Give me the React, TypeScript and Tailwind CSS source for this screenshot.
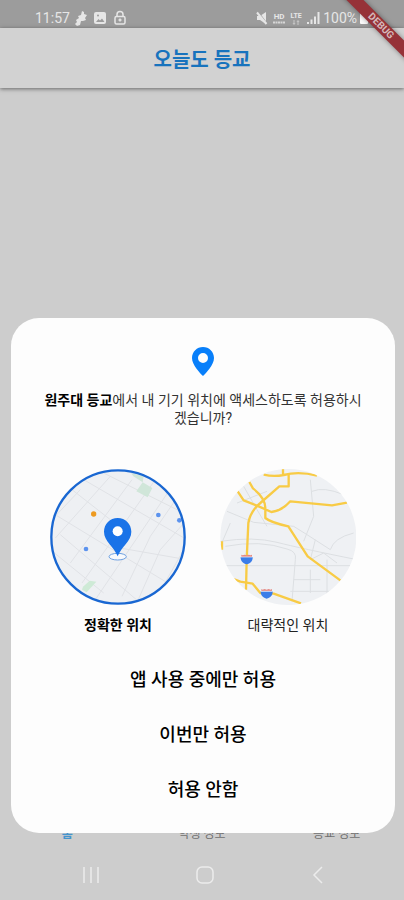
import { useState } from "react";

const PIN =
  "M12 1C5.900 1 1 5.900 1 12c0 7 8 15 11 18 3-3 11-11 11-18 0-6.100-4.900-11-11-11Zm0 6a5 5 0 1 1 0 10 5 5 0 0 1 0-10Z";

function StatusBar() {
  return (
    <div className="flex h-7 items-end justify-between bg-[#9c9c9c] pr-9 pl-[35px] text-[#e6e6e6]">
      <div className="flex h-5 items-center gap-1">
        <span className="text-sm leading-5">11:57</span>
        <svg viewBox="0 0 14 16" className="h-4 w-3.5" fill="currentColor" aria-hidden="true">
          <path d="M8 1l2 1v2l3 1-2 3 1 2-3 1-2 0-1 4-3 1-2-2 2-2-1-2 3-2-1-2 3-1Z" />
        </svg>
        <svg viewBox="0 0 14 14" className="ml-px h-3.5 w-3.5" aria-hidden="true">
          <rect x="1" y="1" width="12" height="12" rx="2" fill="currentColor" />
          <path d="M3 11l2.500-3 1.500 1.500 2-2 2.500 3.500Z" fill="#9c9c9c" />
          <circle cx="5" cy="4.500" r="1" fill="#9c9c9c" />
        </svg>
        <svg viewBox="0 0 14 16" className="ml-0.5 h-4 w-3.5" fill="none" stroke="currentColor" strokeWidth="1.500" aria-hidden="true">
          <rect x="2" y="6.500" width="10" height="7.500" rx="1.500" />
          <path d="M4 6.500V4.500a3 3 0 0 1 6 0V6.500M7 8.500v3M5.500 10h3" />
        </svg>
      </div>
      <div className="flex h-5 items-center gap-[3px]">
        <svg viewBox="0 0 14 14" className="h-3.5 w-3.5" aria-hidden="true">
          <path d="M2 5h3l6-4v12L5 9H2Z" fill="currentColor" />
          <path d="M3 1l9 12" stroke="#9c9c9c" strokeWidth="1.500" />
          <path d="M2 1.500l9.500 11.500" stroke="currentColor" strokeWidth="2" />
        </svg>
        <span className="flex w-[14px] flex-col items-center">
          <span className="text-[8px] leading-[9px] font-bold">HD</span>
          <svg viewBox="0 0 12 3" className="h-[3px] w-3" aria-hidden="true">
            <path d="M0 1.500h12" stroke="currentColor" strokeWidth="2" strokeDasharray="2 .5" opacity=".8" />
          </svg>
        </span>
        <span className="flex w-[14px] flex-col items-center">
          <span className="text-[7px] leading-[8px] font-bold">LTE</span>
          <svg viewBox="0 0 8 5" className="h-[5px] w-2" stroke="currentColor" opacity=".6" fill="none" aria-hidden="true">
            <path d="M2 0v4M1 3l1 1.500L3 3M6 5V1M5 2l1-1.500L7 2" />
          </svg>
        </span>
        <svg viewBox="0 0 14 12" className="h-3 w-3.5" fill="currentColor" aria-hidden="true">
          <path d="M1 10h2v2H1ZM4.500 7.500h2V12h-2ZM8 4.500h2V12H8ZM11.500 0h2v12h-2Z" />
        </svg>
        <span className="text-sm leading-5">100%</span>
        <svg viewBox="0 0 8 14" className="h-3.5 w-2" fill="#fafafa" aria-hidden="true">
          <path d="M2.500 1h3v1H7q1 0 1 1v9q0 1-1 1H1q-1 0-1-1V3q0-1 1-1h1.500Z" />
        </svg>
      </div>
    </div>
  );
}

function DebugRibbon() {
  return (
    <div className="pointer-events-none absolute top-0 right-0 h-20 w-20 overflow-hidden">
      <div className="absolute top-5 -right-[25px] w-24 rotate-45 bg-[#963238] text-center text-[10px] leading-3 font-bold text-[#d5b9bb] shadow-[0_0_5px_rgba(0,0,0,0.4)]">
        DEBUG
      </div>
    </div>
  );
}

function PreciseMap() {
  return (
    <svg viewBox="29 28 408 408" className="h-[136px] w-[136px]" aria-hidden="true">
      <defs>
        <clipPath id="precise">
          <circle cx="233" cy="232" r="201" />
        </clipPath>
      </defs>
      <g clipPath="url(#precise)">
        <rect x="29" y="28" width="408" height="408" fill="#eef0f3" />
        <g fill="none" stroke="#e0e2e6" strokeWidth="3">
          <path d="M20 150L250 290L440 405M95 90L210 180M130 60L440 240M190 40L440 165M60 225L300 430M30 270L190 400M210 260L440 300" />
          <path d="M45 235L210 50M90 310L275 60M125 370L345 60M165 420L395 80M245 410L330 230L420 100M285 440L360 270L440 180M30 185L120 90M340 430L430 270" />
        </g>
        <path d="M307 68l29 17-14 28-34-18ZM272 40l38 10-3 18-28-18Z" fill="#d0e6d9" />
        <path d="M128 381l20-18 20 3-29 32-14-8Z" fill="#ceead6" />
        <circle cx="160" cy="163" r="8" fill="#ed9a20" />
        <circle cx="354" cy="166" r="7" fill="#5c93ee" />
        <circle cx="417" cy="182" r="7" fill="#5c93ee" />
        <circle cx="137" cy="268" r="7" fill="#5c93ee" />
        <ellipse cx="232" cy="291" rx="26" ry="10" fill="#f7f9fc" stroke="#6c9fe0" strokeWidth="3" />
        <path
          d="M232 175c-23 0-41 18-41 41 0 29 30 44 41 74 11-30 41-45 41-74 0-23-18-41-41-41Z"
          fill="#1a73e8"
        />
        <circle cx="232" cy="215" r="15" fill="#fff" />
      </g>
      <circle cx="233" cy="232" r="200" fill="none" stroke="#1967d2" strokeWidth="7" />
    </svg>
  );
}

function Shield({ x, y }: { x: number; y: number }) {
  return (
    <g transform={`translate(${x} ${y})`}>
      <path d="M-16-13l4 2 6-2 6 2 6-2 6 2 4-2v7h-32Z" fill="#e58a84" />
      <path d="M-18-6h36c1 12-8 20-18 22-10-2-19-10-18-22Z" fill="#3b7de9" />
      <path d="M-18-6h36" stroke="#fff" strokeWidth="2" />
    </g>
  );
}

function ApproximateMap() {
  return (
    <svg viewBox="29 28 408 408" className="h-[136px] w-[136px]" aria-hidden="true">
      <defs>
        <clipPath id="approximate">
          <circle cx="234" cy="232" r="204" />
        </clipPath>
      </defs>
      <g clipPath="url(#approximate)">
        <rect x="29" y="28" width="410" height="408" fill="#eff1f4" />
        <g fill="none" stroke="#dcdfe2" strokeWidth="3">
          <path d="M30 318H440M30 245Q130 230 200 248T440 300M45 260Q150 240 230 268Q260 275 255 300L245 425M50 155L130 188L250 200L290 225L360 270" />
          <path d="M300 60L310 170L280 245M305 95Q340 80 400 105M360 270Q370 235 430 220M240 395H400M350 300V430M300 330V400M60 190L30 260M100 80L140 150L170 200M80 130L170 95M315 240L300 300L340 280L380 310M250 360H330" />
        </g>
        <g fill="none" stroke="#f8cb45" strokeWidth="7" strokeLinejoin="round">
          <path d="M160 45Q190 52 220 46Q265 34 320 48M218 28V45M235 45V80H207L150 130Q120 155 114 190L109 300L107 390" />
          <path d="M80 92L100 122L145 140L183 157Q215 153 240 125L365 137L410 129M117 67L128 86Q165 115 165 145V175Q180 188 234 200L292 290L390 362M70 358L90 366L127 372L150 400L190 402L272 431M35 245V270" />
        </g>
        <Shield x={109} y={298} />
        <Shield x={169} y={401} />
      </g>
    </svg>
  );
}

export default function App() {
  const [accuracy, setAccuracy] = useState("precise");
  const choices = [
    { id: "precise", label: "정확한 위치", map: <PreciseMap /> },
    { id: "approximate", label: "대략적인 위치", map: <ApproximateMap /> },
  ];

  return (
    <div className="relative flex min-h-screen flex-col overflow-hidden bg-[#cdcdcd] font-[Roboto,'Noto_Sans_CJK_KR',sans-serif]">
      <StatusBar />
      <header className="flex h-[60px] items-center justify-center bg-[#d2d2d2] pt-1 shadow-[0_1px_4px_rgba(0,0,0,0.5)]">
        <h1 className="text-xl leading-6 font-bold text-[#1873bd]">오늘도 등교</h1>
      </header>
      <DebugRibbon />
      <main className="flex-1" />
      <nav className="grid grid-cols-3 pb-2 text-center text-xs leading-4 text-[#707070]">
        <a href="#home" className="font-bold text-[#4595cd]">홈</a>
        <a href="#student">학생 정보</a>
        <a href="#attendance">등교 정보</a>
      </nav>
      <div className="flex h-[50px] items-center justify-between pr-[74px] pl-[79px] text-[#ececec]">
        <button type="button" aria-label="최근 앱" className="flex w-6 justify-center">
          <svg viewBox="0 0 20 20" className="h-5 w-5" stroke="currentColor" strokeWidth="1.500">
            <path d="M3 2v16M10 2v16M17 2v16" />
          </svg>
        </button>
        <button type="button" aria-label="홈 화면" className="flex w-6 justify-center">
          <svg viewBox="0 0 20 20" className="h-5 w-5" fill="none" stroke="currentColor" strokeWidth="1.500">
            <rect x="2" y="2" width="16" height="16" rx="5" />
          </svg>
        </button>
        <button type="button" aria-label="뒤로" className="flex w-6 justify-center">
          <svg viewBox="0 0 20 20" className="h-5 w-5" fill="none" stroke="currentColor" strokeWidth="1.500">
            <path d="M14 2L6 10l8 8" />
          </svg>
        </button>
      </div>

      <section
        role="dialog"
        aria-labelledby="permission-title"
        className="absolute right-[9px] bottom-[67px] left-[11px] flex flex-col items-center rounded-[28px] bg-[#fdfdfd] pt-7 pb-4 text-black"
      >
        <svg viewBox="0 0 24 31" className="h-[31px] w-6" aria-hidden="true">
          <path d={PIN} fill="#087ffa" fillRule="evenodd" />
        </svg>
        <h2 id="permission-title" className="mt-3.5 w-[326px] text-center text-sm leading-[18px] font-normal text-[#333]">
          <b className="text-black">원주대 등교</b>에서 내 기기 위치에 액세스하도록 허용하시겠습니까?
        </h2>
        <div role="radiogroup" aria-label="위치 정확도" className="mt-[42px] flex gap-[34px]">
          {choices.map((choice) => (
            <label key={choice.id} className="relative flex cursor-pointer flex-col items-center gap-2.5">
              <input
                type="radio"
                name="accuracy"
                className="peer absolute inset-0 cursor-pointer opacity-0"
                checked={accuracy === choice.id}
                onChange={() => setAccuracy(choice.id)}
              />
              {choice.map}
              <span className="text-sm leading-5 text-[#222] peer-checked:font-bold peer-checked:text-black">
                {choice.label}
              </span>
            </label>
          ))}
        </div>
        <div className="mt-[17px] flex w-full flex-col text-lg leading-6 font-medium">
          <button type="button" className="h-[55px]">앱 사용 중에만 허용</button>
          <button type="button" className="h-[55px]">이번만 허용</button>
          <button type="button" className="h-[55px]">허용 안함</button>
        </div>
      </section>
    </div>
  );
}
